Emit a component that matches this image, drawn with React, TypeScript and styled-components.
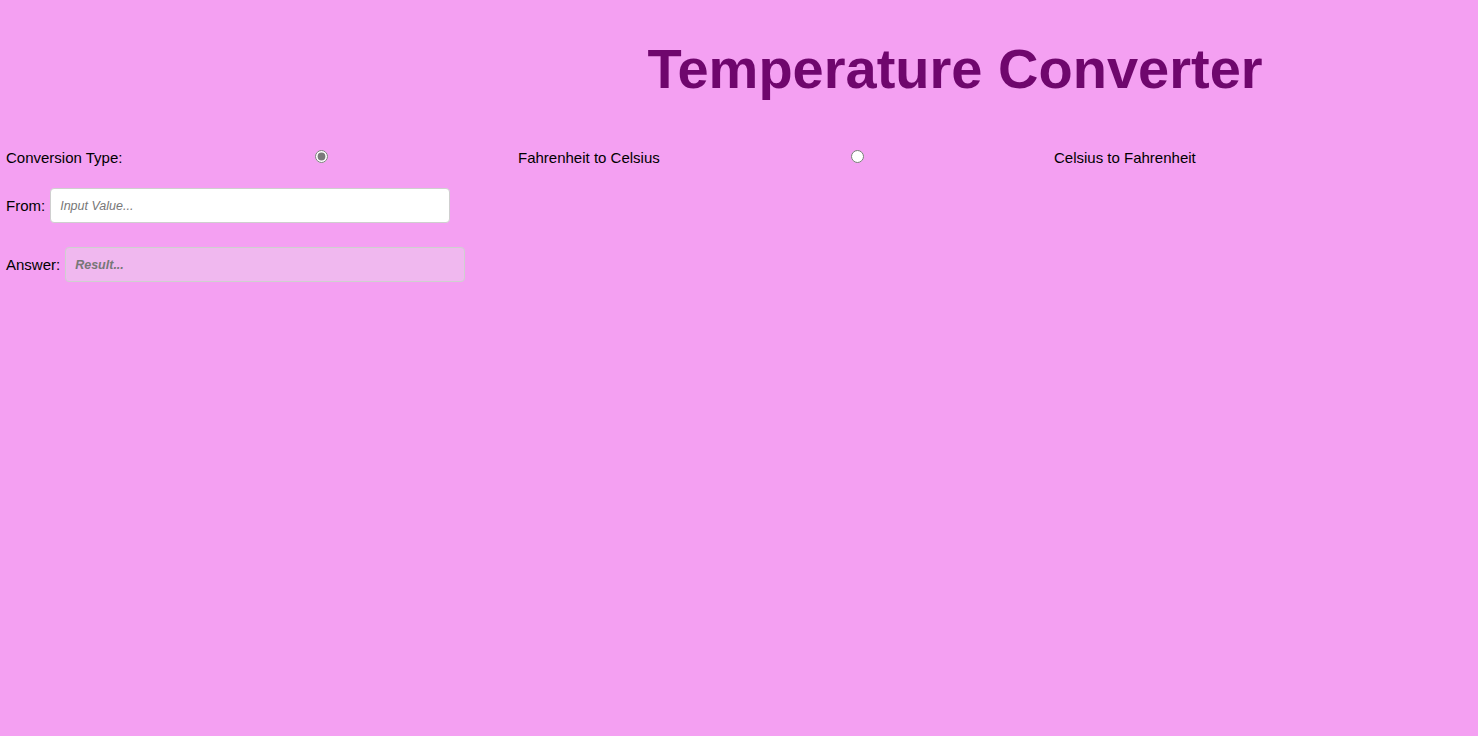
import React, { useState } from "react";
import styled, { createGlobalStyle } from "styled-components";

const Global = createGlobalStyle`
  html, body {
    margin: 0;
    padding: 0;
    background: #f4a0f2;
    font-family: "Liberation Sans", Arial, sans-serif;
    color: #000;
  }
`;

const Page = styled.div`
  min-height: 736px;
  padding: 37px 6px 0;
  box-sizing: border-box;
`;

const Title = styled.h1`
  margin: 0;
  padding-left: 432px;
  text-align: center;
  font-size: 56px;
  font-weight: bold;
  line-height: 64px;
  color: #6f076d;
`;

const TypeRow = styled.div`
  display: grid;
  grid-template-columns: 303px 209px 327px 209px 1fr;
  align-items: center;
  margin-top: 48px;
  font-size: 15px;
  line-height: 17px;
`;

const Radio = styled.input.attrs({ type: "radio" })`
  margin: 0 0 2px 6px;
  width: 13px;
  height: 13px;
  accent-color: #7a7a7a;
  justify-self: start;
`;

const FieldRow = styled.div<{ $top: number }>`
  display: flex;
  align-items: center;
  gap: 5px;
  margin-top: ${(p) => p.$top}px;
  font-size: 15px;
`;

const Field = styled.input<{ $readonly?: boolean }>`
  box-sizing: border-box;
  width: 400px;
  height: 35px;
  padding: 0 9px;
  border: 1px solid #cfcfcf;
  border-radius: 4px;
  background: ${(p) => (p.$readonly ? "#f0b8ef" : "#ffffff")};
  font-family: "Liberation Sans", Arial, sans-serif;
  font-size: 12.5px;
  font-style: italic;
  font-weight: ${(p) => (p.$readonly ? "bold" : "normal")};
  outline: none;
  &::placeholder {
    color: #777;
  }
`;

export default function App() {
  const [mode, setMode] = useState("f2c");
  return (
    <Page>
      <Global />
      <Title>Temperature Converter</Title>
      <TypeRow>
        <span>Conversion Type:</span>
        <Radio name="type" checked={mode === "f2c"} onChange={() => setMode("f2c")} />
        <span>Fahrenheit to Celsius</span>
        <Radio name="type" checked={mode === "c2f"} onChange={() => setMode("c2f")} />
        <span>Celsius to Fahrenheit</span>
      </TypeRow>
      <FieldRow $top={22}>
        <span>From:</span>
        <Field placeholder="Input Value..." />
      </FieldRow>
      <FieldRow $top={24}>
        <span>Answer:</span>
        <Field $readonly readOnly placeholder="Result..." />
      </FieldRow>
    </Page>
  );
}
